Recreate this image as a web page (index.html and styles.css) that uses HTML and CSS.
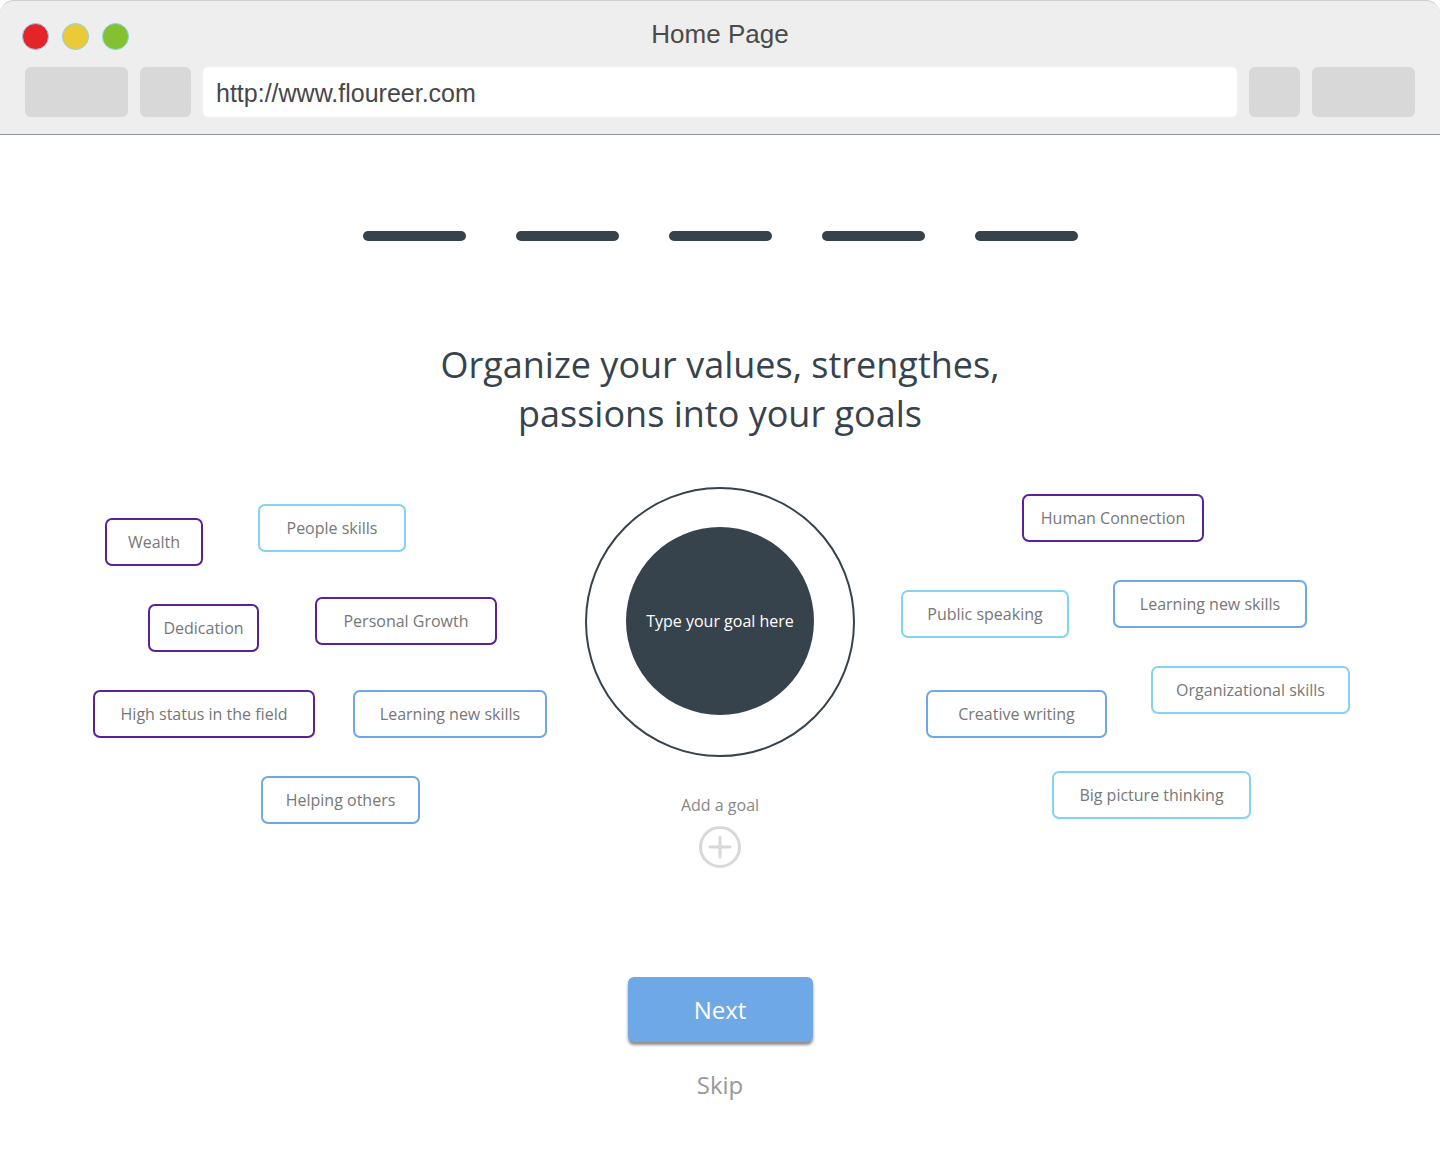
FILE: index.html
```html
<!DOCTYPE html>
<html>
<head>
<meta charset="utf-8">
<title>Home Page</title>
<link rel="stylesheet" href="styles.css">
</head>
<body>
<div class="window">
  <header class="chrome">
    <div class="chrome-top">
      <div class="lights">
        <span class="light red"></span>
        <span class="light yellow"></span>
        <span class="light green"></span>
      </div>
      <div class="title">Home Page</div>
    </div>
    <div class="toolbar">
      <div class="btn wide"></div>
      <div class="btn small"></div>
      <div class="url">http://www.floureer.com</div>
      <div class="btn small"></div>
      <div class="btn wide"></div>
    </div>
  </header>
  <main class="page">
    <div class="steps">
      <span class="step"></span>
      <span class="step"></span>
      <span class="step"></span>
      <span class="step"></span>
      <span class="step"></span>
    </div>
    <h1 class="heading">Organize your values, strengthes,<br>passions into your goals</h1>
    <section class="cloud">
      <div class="tag purple t-wealth">Wealth</div>
      <div class="tag light t-people">People skills</div>
      <div class="tag purple t-dedication">Dedication</div>
      <div class="tag purple t-growth">Personal Growth</div>
      <div class="tag purple t-status">High status in the field</div>
      <div class="tag blue t-learn-l">Learning new skills</div>
      <div class="tag blue t-helping">Helping others</div>
      <div class="tag purple t-human">Human Connection</div>
      <div class="tag light t-public">Public speaking</div>
      <div class="tag blue t-learn-r">Learning new skills</div>
      <div class="tag light t-org">Organizational skills</div>
      <div class="tag blue t-creative">Creative writing</div>
      <div class="tag light t-big">Big picture thinking</div>

      <div class="goal-ring">
        <div class="goal-core">Type your goal here</div>
      </div>
      <div class="add-label">Add a goal</div>
      <svg class="add-icon" width="42" height="42" viewBox="0 0 42 42">
        <circle cx="21" cy="21" r="19.5" fill="none" stroke="#d8d8d8" stroke-width="3"/>
        <line x1="21" y1="11" x2="21" y2="31" stroke="#d8d8d8" stroke-width="3" stroke-linecap="round"/>
        <line x1="11" y1="21" x2="31" y2="21" stroke="#d8d8d8" stroke-width="3" stroke-linecap="round"/>
      </svg>
    </section>
    <button class="next">Next</button>
    <div class="skip">Skip</div>
  </main>
</div>
</body>
</html>
```
FILE: styles.css
```css
html, body {
  margin: 0;
  padding: 0;
  background: #ffffff;
}
body {
  font-family: "Open Sans", "Noto Sans", sans-serif;
}
.window {
  width: 1440px;
  height: 1159px;
  overflow: hidden;
  background: #fff;
}
.chrome {
  background: #eeeeee;
  border-top: 1px solid #cfcfcf;
  border-bottom: 1px solid #8f979c;
  border-radius: 14px 14px 0 0;
  box-sizing: border-box;
  height: 135px;
}
.chrome-top {
  position: relative;
  height: 66px;
}
.lights {
  display: flex;
  gap: 13px;
  padding: 22px 0 0 22px;
}
.light {
  width: 27px;
  height: 27px;
  border-radius: 50%;
  box-sizing: border-box;
  border: 1px solid #d6d6d6;
}
.red { background: #e52328; }
.yellow { background: #e9cb3a; }
.green { background: #84c131; }
.title {
  position: absolute;
  left: 0;
  right: 0;
  top: 18px;
  text-align: center;
  font-family: "Liberation Sans", Arial, sans-serif;
  font-size: 26px;
  color: #4a4a4a;
}
.toolbar {
  display: flex;
  gap: 12px;
  padding: 0 25px;
  height: 50px;
}
.btn {
  background: #d8d8d8;
  border-radius: 6px;
  height: 50px;
}
.btn.wide { width: 103px; }
.btn.small { width: 51px; }
.url {
  flex: 1;
  background: #fff;
  border-radius: 5px;
  height: 50px;
  line-height: 52px;
  padding-left: 13px;
  font-family: "Liberation Sans", Arial, sans-serif;
  font-size: 25px;
  color: #474747;
}
.page {
  display: flex;
  flex-direction: column;
  align-items: center;
}
.steps {
  display: flex;
  gap: 50px;
  margin-top: 96px;
}
.step {
  width: 103px;
  height: 10px;
  border-radius: 5px;
  background: #37434c;
}
.heading {
  margin: 99px 0 0 0;
  font-weight: 400;
  font-size: 36px;
  line-height: 49px;
  color: #37434c;
  text-align: center;
}
.cloud {
  position: relative;
  width: 1440px;
  height: 440px;
  display: flex;
  flex-direction: column;
  align-items: center;
}
.goal-ring {
  margin-top: 49px;
  width: 270px;
  height: 270px;
  box-sizing: border-box;
  border: 2px solid #37434c;
  border-radius: 50%;
  display: flex;
  align-items: center;
  justify-content: center;
}
.goal-core {
  width: 188px;
  height: 188px;
  border-radius: 50%;
  background: #37434c;
  color: #fff;
  font-size: 16px;
  display: flex;
  align-items: center;
  justify-content: center;
  margin-top: -2px;
}
.add-label {
  margin-top: 37px;
  font-size: 16px;
  line-height: 22px;
  color: #888;
}
.add-icon {
  margin-top: 10px;
  display: block;
}
.tag {
  position: absolute;
  height: 48px;
  box-sizing: border-box;
  border: 2px solid;
  border-radius: 7px;
  display: flex;
  align-items: center;
  justify-content: center;
  font-size: 16px;
  color: #777;
  background: #fff;
}
.purple { border-color: #5b2198; }
.light { border-color: #84d3f3; }
.blue { border-color: #6fa6e7; }
.t-wealth { left: 105px; top: 80px; width: 98px; }
.t-people { left: 258px; top: 66px; width: 148px; }
.t-dedication { left: 148px; top: 166px; width: 111px; }
.t-growth { left: 315px; top: 159px; width: 182px; }
.t-status { left: 93px; top: 252px; width: 222px; }
.t-learn-l { left: 353px; top: 252px; width: 194px; }
.t-helping { left: 261px; top: 338px; width: 159px; }
.t-human { left: 1022px; top: 56px; width: 182px; }
.t-public { left: 901px; top: 152px; width: 168px; }
.t-learn-r { left: 1113px; top: 142px; width: 194px; }
.t-org { left: 1151px; top: 228px; width: 199px; }
.t-creative { left: 926px; top: 252px; width: 181px; }
.t-big { left: 1052px; top: 333px; width: 199px; }
.next {
  margin-top: 99px;
  width: 185px;
  height: 65px;
  border: none;
  border-radius: 6px;
  background: #6fa8e6;
  color: #fff;
  font-family: "Open Sans", "Noto Sans", sans-serif;
  font-size: 24px;
  box-shadow: 0 3px 3px rgba(0, 0, 0, 0.45);
}
.skip {
  margin-top: 26px;
  font-size: 24px;
  line-height: 33px;
  color: #999;
}
```
